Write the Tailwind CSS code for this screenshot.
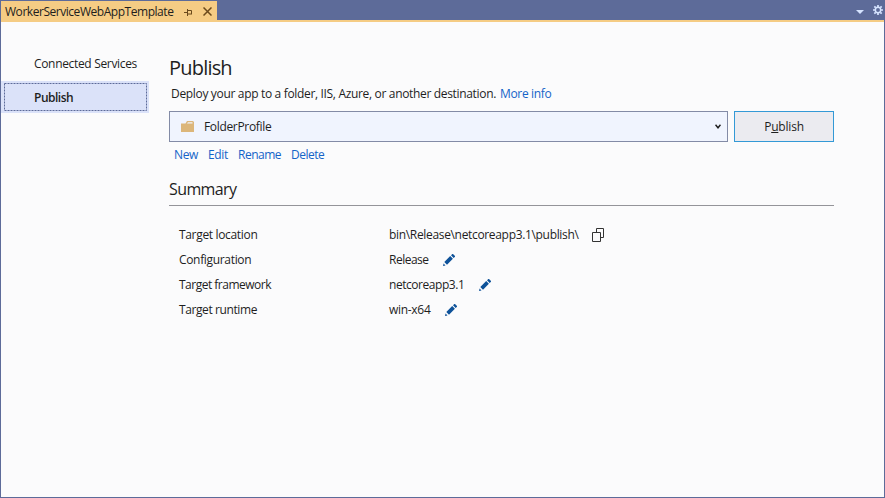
<!DOCTYPE html>
<html lang="en">
<head>
<meta charset="utf-8">
<title>Publish</title>
<script src="https://cdn.jsdelivr.net/npm/@tailwindcss/browser@4"></script>
</head>
<body class="w-[885px] h-[498px] overflow-hidden bg-[#5d6b99] font-['Open_Sans','Noto_Sans',sans-serif] text-[12px] leading-4 tracking-[-0.33px] text-[#1e1e1e] whitespace-nowrap flex flex-col px-px pb-px">
<header class="h-5 shrink-0 flex items-end justify-between">
  <div class="h-[19px] w-[216px] bg-[#f5cc84] flex items-center pl-1">
    <span class="w-[179px] tracking-[-0.46px] pt-[2px]">WorkerServiceWebAppTemplate</span>
    <svg class="w-[9px] h-[9px] mt-[3px]" viewBox="0 0 9 9" fill="none" stroke="#6b4a1c"><path d="M0 4.500H3M3.500 1V8M3.500 2.500H7.500V6M3.500 6H8" /></svg>
    <svg class="w-[9px] h-[9px] mt-[2px] ml-[10px]" viewBox="0 0 9 9" fill="none" stroke="#6b4a1c" stroke-width="1.500"><path d="M.5 .5L8.500 8.500M8.500 .5L.5 8.500" /></svg>
  </div>
  <div class="flex items-center gap-[9px] h-5 pr-px">
    <svg class="w-2 h-1 mt-[4px]" viewBox="0 0 8 4" fill="#d6e4ff"><path d="M0 0H8L4 4Z" /></svg>
    <svg class="w-[10px] h-[10px]" viewBox="0 0 10 10" fill="none" stroke="#d6e4ff"><circle cx="5" cy="5" r="2.700" stroke-width="1.500" /><path stroke-width="1.700" d="M5 0V2M5 8V10M0 5H2M8 5H10M1.300 1.300L2.700 2.700M7.300 7.300L8.700 8.700M8.700 1.300L7.300 2.700M2.700 7.300L1.300 8.700" /></svg>
  </div>
</header>
<div class="h-[2px] shrink-0 bg-[#f5cc84]"></div>
<div class="flex-1 bg-[#fbfbfc] flex">
  <nav class="w-[148px] mr-5 pt-[25px]">
    <div class="h-[34px] pl-[33px] pt-[9px]">Connected Services</div>
    <div class="h-8 bg-[#dbe2f9] py-[2px] pl-[3px] pr-[2px]"><svg class="absolute w-[143px] h-[28px]" fill="none" stroke="#5d6b99"><rect x=".5" y=".5" width="142" height="27" stroke-dasharray="2 1" /></svg><div class="pl-[30px] pt-[7px] font-semibold tracking-[-0.5px]">Publish</div></div>
  </nav>
  <main class="w-[665px] pt-[33px]">
    <h1 class="text-[20px] leading-[26px] tracking-[-0.8px]">Publish</h1>
    <p class="pl-[2px] pt-[5px] flex"><span class="w-[329px]">Deploy your app to a folder, IIS, Azure, or another destination.</span><a class="text-[#1464c8]">More info</a></p>
    <div class="mt-[9px] flex gap-[6px] h-[31px]">
      <div class="w-[559px] border border-[#838ba6] bg-[#f0f4fe] flex items-center pl-[11px] pr-[6px]">
        <svg class="w-[13px] h-[11px]" viewBox="0 0 13 11" fill="#dcb67a"><path d="M0 2.500H4.500L6 0H12L13 1V11H0Z" /><path d="M6 2.500L7 1.300H11.500V2.500Z" fill="#f0f4fe" /></svg>
        <span class="ml-[10px]">FolderProfile</span>
        <svg class="w-[6px] h-[5px] ml-auto -mt-px" viewBox="0 0 6 5" fill="none" stroke="#1e1e1e" stroke-width="1.500"><path d="M.5 .8L3 3.800L5.500 .8" /></svg>
      </div>
      <div class="w-[100px] border border-[#3399d6] bg-[#ebebf0] flex items-center justify-center tracking-[-0.2px]"><span>P<u>u</u>blish</span></div>
    </div>
    <div class="flex pl-[5px] mt-[5px] text-[#1464c8]"><a class="w-[34px]">New</a><a class="w-[30px]">Edit</a><a class="w-[53px] tracking-[-0.5px]">Rename</a><a class="tracking-[-0.5px]">Delete</a></div>
    <h2 class="text-[16px] leading-[22px] tracking-[-0.6px] mt-[15px] h-[28px] border-b border-[#949499]">Summary</h2>
    <div class="grid grid-cols-[210px_1fr] auto-rows-[25px] items-center pl-[10px] mt-[16px]">
      <span>Target location</span><div class="flex items-center"><span class="w-[203px]">bin\Release\netcoreapp3.1\publish\</span><svg class="w-[12px] h-[14px]" viewBox="0 0 12 14" fill="none" stroke="#333"><path d="M4.500 4.500V.5H11.500V9.500H8.500M.5 4.500H8.500V13.500H.5Z" /></svg></div>
      <span>Configuration</span><div class="flex items-center"><span class="w-[54px] tracking-[-0.5px]">Release</span><svg class="w-[12px] h-[12px]" viewBox="0 0 12 12" fill="#0e5299"><path d="M1.300 8L7.200 2.100L9.900 4.800L4 10.700ZM0 12L.6 9.500L2.500 11.400ZM8 1.300L9.300 0H10L12 2V2.700L10.700 4Z" /></svg></div>
      <span class="tracking-[-0.5px]">Target framework</span><div class="flex items-center"><span class="w-[90px] tracking-[-0.45px]">netcoreapp3.1</span><svg class="w-[12px] h-[12px]" viewBox="0 0 12 12" fill="#0e5299"><path d="M1.300 8L7.200 2.100L9.900 4.800L4 10.700ZM0 12L.6 9.500L2.500 11.400ZM8 1.300L9.300 0H10L12 2V2.700L10.700 4Z" /></svg></div>
      <span class="tracking-[-0.4px]">Target runtime</span><div class="flex items-center"><span class="w-[56px] tracking-[-0.3px]">win-x64</span><svg class="w-[12px] h-[12px]" viewBox="0 0 12 12" fill="#0e5299"><path d="M1.300 8L7.200 2.100L9.900 4.800L4 10.700ZM0 12L.6 9.500L2.500 11.400ZM8 1.300L9.300 0H10L12 2V2.700L10.700 4Z" /></svg></div>
    </div>
  </main>
</div>
</body>
</html>
